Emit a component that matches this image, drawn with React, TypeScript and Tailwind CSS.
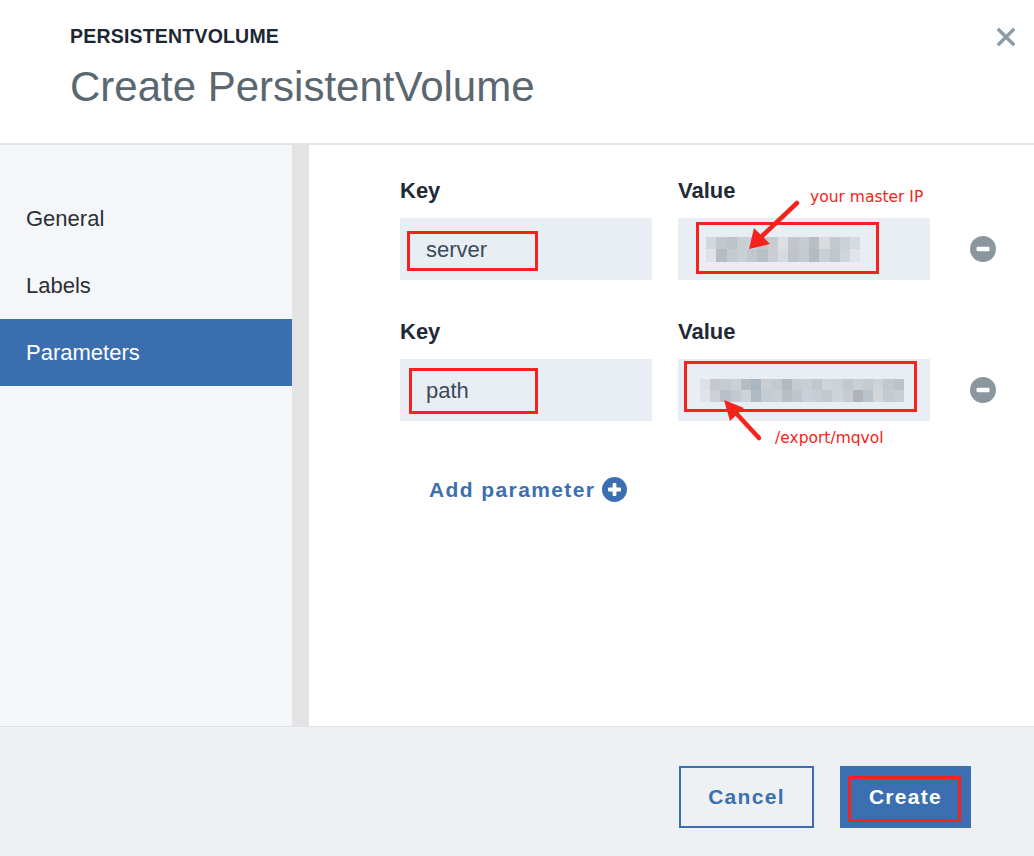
const mosaicA = [
  ['bg-[#d3d8dd]', 'bg-[#c2c8ce]', 'bg-[#bcc3ca]', 'bg-[#c9ced3]', 'bg-[#cdd2d8]', 'bg-[#bfc6cd]', 'bg-[#c6ccd2]', 'bg-[#dde0e3]', 'bg-[#c1c7cd]', 'bg-[#c7ccd1]', 'bg-[#b8bec4]', 'bg-[#d9dcdf]', 'bg-[#c3c9cf]', 'bg-[#ccd1d6]', 'bg-[#d5dae0]'],
  ['bg-[#dfe2e6]', 'bg-[#b7bcc1]', 'bg-[#c4cad0]', 'bg-[#c9cfd5]', 'bg-[#c2c8ce]', 'bg-[#b9c0c6]', 'bg-[#c8ced4]', 'bg-[#d6dadd]', 'bg-[#bec4ca]', 'bg-[#c4cad0]', 'bg-[#b5bbc1]', 'bg-[#cbd0d5]', 'bg-[#c0c6cc]', 'bg-[#d0d5da]', 'bg-[#e1e5ea]'],
];

const mosaicB = [
  ['bg-[#dde1e6]', 'bg-[#c3c9cf]', 'bg-[#c6ccd2]', 'bg-[#ccd1d6]', 'bg-[#b6bcc2]', 'bg-[#aab6c2]', 'bg-[#c8ced4]', 'bg-[#c4cad1]', 'bg-[#b5b9bd]', 'bg-[#c5ccd3]', 'bg-[#c9cfd5]', 'bg-[#c0c7ce]', 'bg-[#cfd4d9]', 'bg-[#cdd2d8]', 'bg-[#c2c8cf]', 'bg-[#cbd0d5]', 'bg-[#c5cbd1]', 'bg-[#ced3d8]', 'bg-[#c1c8cf]', 'bg-[#bcc3ca]'],
  ['bg-[#e0e3e7]', 'bg-[#ccd2d8]', 'bg-[#b9c0c7]', 'bg-[#c3c9cf]', 'bg-[#ced3d6]', 'bg-[#b0bac4]', 'bg-[#c5cbd2]', 'bg-[#c9ced4]', 'bg-[#babfc4]', 'bg-[#c0c6cd]', 'bg-[#c9d0d8]', 'bg-[#c7cdd3]', 'bg-[#c2c8cf]', 'bg-[#cfd4d9]', 'bg-[#c6ccd3]', 'bg-[#b0b3b6]', 'bg-[#bac2cb]', 'bg-[#d2d6da]', 'bg-[#c3cad1]', 'bg-[#c8ced4]'],
];

function Mosaic({ rows, cell }: { rows: string[][]; cell: string }) {
  return (
    <div className="flex flex-col">
      {rows.map((row, r) => (
        <div key={r} className="flex">
          {row.map((c, i) => (
            <div key={i} className={`${cell} ${c}`} />
          ))}
        </div>
      ))}
    </div>
  );
}

function MinusIcon() {
  return (
    <svg width="26" height="26" viewBox="0 0 26 26">
      <circle cx="13" cy="13" r="13" fill="#8b979f" />
      <rect x="6.5" y="10.8" width="13" height="4.4" rx="1.2" fill="#fff" />
    </svg>
  );
}

function PlusIcon() {
  return (
    <svg width="25" height="25" viewBox="0 0 25 25">
      <circle cx="12.5" cy="12.5" r="12.5" fill="#3c6fb1" />
      <rect x="6" y="10.6" width="13" height="3.8" rx="1" fill="#fff" />
      <rect x="10.6" y="6" width="3.8" height="13" rx="1" fill="#fff" />
    </svg>
  );
}

function ParamRow({ keyText, value }: { keyText: string; value: React.ReactNode }) {
  return (
    <div className="flex flex-col">
      <div className="flex gap-[26px] text-[22px] font-bold leading-none text-[#1f2a36]">
        <div className="w-[252px]">Key</div>
        <div className="w-[252px]">Value</div>
      </div>
      <div className="mt-[16px] flex items-center gap-[26px]">
        <div className="flex h-[62px] w-[252px] items-center bg-[#e9eef5] pl-[26px] text-[22px] text-[#3b4a58]">
          {keyText}
        </div>
        <div className="flex h-[62px] w-[252px] items-center bg-[#e9eef5]">{value}</div>
        <div className="ml-[14px] flex">
          <MinusIcon />
        </div>
      </div>
    </div>
  );
}

export default function App() {
  const nav = ['General', 'Labels', 'Parameters'];
  return (
    <div className="relative flex h-[856px] w-[1034px] flex-col overflow-hidden bg-white font-['Liberation_Sans',Arial,sans-serif]">
      <header className="flex h-[145px] shrink-0 justify-between border-b-2 border-[#e1e5ea] bg-white">
        <div className="pl-[70px] pt-[27px]">
          <div className="text-[19.5px] font-bold uppercase leading-none tracking-[0.2px] text-[#1c2733]">
            PersistentVolume
          </div>
          <h1 className="mt-[19px] text-[42px] leading-none text-[#5a6771]">Create PersistentVolume</h1>
        </div>
        <div className="pr-[19px] pt-[28px]">
          <svg width="18" height="18" viewBox="0 0 18 18">
            <path d="M2 2 L16 16 M16 2 L2 16" stroke="#8c9ba5" strokeWidth="3.4" strokeLinecap="square" />
          </svg>
        </div>
      </header>

      <div className="flex h-[581px] shrink-0">
        <aside className="w-[292px] bg-[#f4f6fa] pt-[40px]">
          {nav.map((n) => (
            <div
              key={n}
              className={`flex h-[67px] items-center pl-[26px] text-[22px] ${
                n === 'Parameters' ? 'bg-[#3a6eaf] text-white' : 'text-[#2b2f35]'
              }`}
            >
              {n}
            </div>
          ))}
        </aside>
        <div className="w-[17px] bg-[#e3e3e3]" />
        <main className="flex-1 bg-white pl-[91px] pt-[35px]">
          <ParamRow
            keyText="server"
            value={
              <div className="ml-[28px]">
                <Mosaic rows={mosaicA} cell="h-[12.5px] w-[10.3px]" />
              </div>
            }
          />
          <div className="mt-[41px]">
            <ParamRow
              keyText="path"
              value={
                <div className="ml-[22px]">
                  <Mosaic rows={mosaicB} cell="h-[11.5px] w-[10.2px]" />
                </div>
              }
            />
          </div>
          <div className="ml-[29px] mt-[56px] flex items-center gap-[7px]">
            <span className="text-[21px] font-bold leading-none tracking-[1.4px] text-[#3c6fb1]">Add parameter</span>
            <PlusIcon />
          </div>
        </main>
      </div>

      <footer className="flex flex-1 justify-end gap-[26px] border-t border-[#dfe3e8] bg-[#eef1f4] pr-[63px] pt-[39px]">
        <button className="flex h-[62px] w-[135px] items-center justify-center border-2 border-[#3c6fb1] text-[21px] font-bold tracking-[1.3px] text-[#3c6fb1]">
          Cancel
        </button>
        <button className="flex h-[62px] w-[131px] items-center justify-center bg-[#3c6fb1] text-[21px] font-bold tracking-[1.3px] text-white">
          Create
        </button>
      </footer>

      {/* red annotations */}
      <div className="absolute left-[407px] top-[231px] h-[40px] w-[131px] border-[3px] border-[#f5231b]" />
      <div className="absolute left-[696px] top-[222px] h-[52px] w-[183px] border-[3px] border-[#f5231b]" />
      <div className="absolute left-[409px] top-[368px] h-[46px] w-[129px] border-[3px] border-[#f5231b]" />
      <div className="absolute left-[684px] top-[361px] h-[51px] w-[233px] border-[3px] border-[#f5231b]" />
      <div className="absolute left-[848px] top-[776px] h-[46px] w-[113px] border-[3px] border-[#f5231b]" />
      <div className="absolute left-[810px] top-[190px] font-['DejaVu_Sans',sans-serif] text-[15.5px] leading-none text-[#f5231b]">
        your master IP
      </div>
      <div className="absolute left-[775px] top-[431px] font-['DejaVu_Sans',sans-serif] text-[15.5px] leading-none text-[#f5231b]">
        /export/mqvol
      </div>
      <svg className="pointer-events-none absolute left-0 top-0" width="1034" height="856">
        <line x1="797" y1="203" x2="760" y2="238" stroke="#f5231b" strokeWidth="4.5" strokeLinecap="round" />
        <polygon points="749,249 754,228 770,244" fill="#f5231b" />
        <line x1="759" y1="438" x2="734" y2="411" stroke="#f5231b" strokeWidth="4.5" strokeLinecap="round" />
        <polygon points="724,400 744,408 730,421" fill="#f5231b" />
      </svg>
    </div>
  );
}
